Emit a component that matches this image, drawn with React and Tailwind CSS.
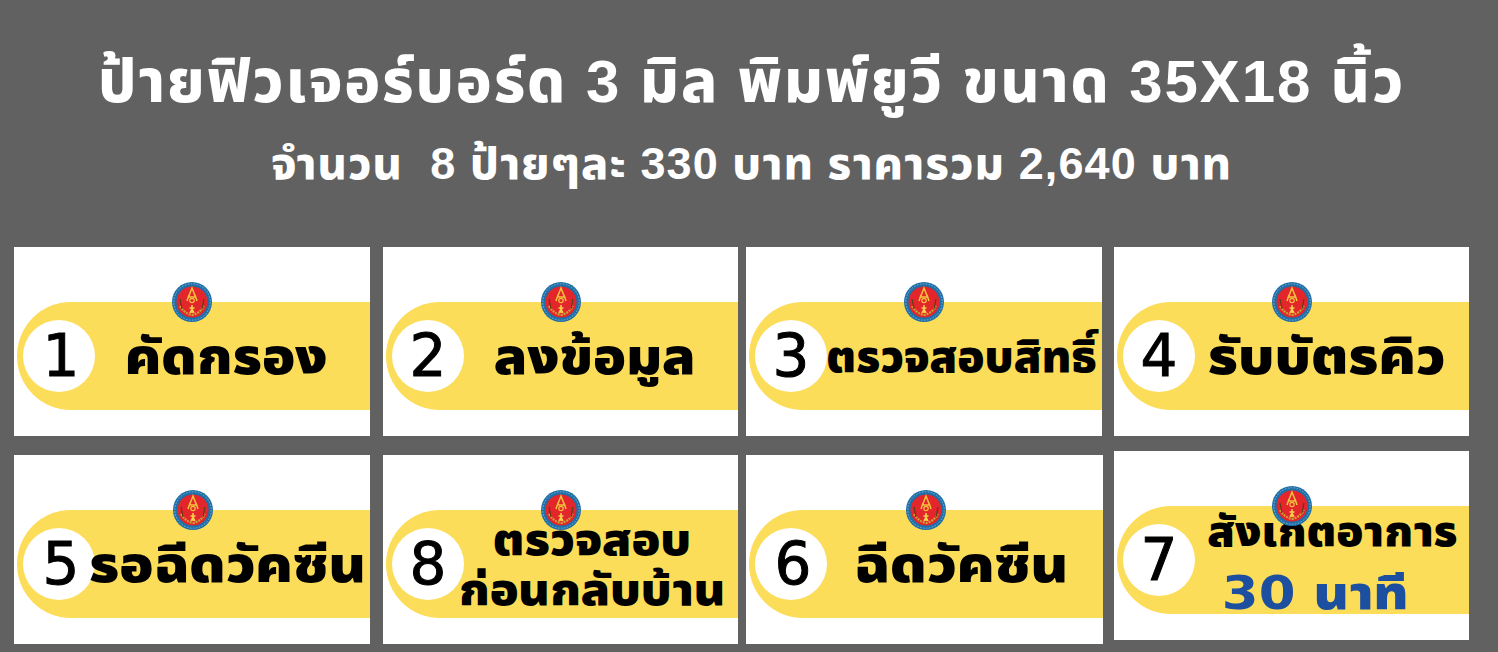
const Logo = () => (
  <svg viewBox="0 0 40 40" className="w-10 h-10">
    <circle cx="20" cy="20" r="20" fill="#1f6fa8" />
    <circle cx="20" cy="20" r="18.2" fill="none" stroke="#7fb4d0" strokeWidth="1" strokeDasharray="1.5 1.5" />
    <circle cx="20" cy="20" r="15.5" fill="#e3262c" />
    <path d="M20 6 L16.5 15 L23.5 15 Z M17 13 L15 19 M23 13 L25 19" fill="none" stroke="#f2c23c" strokeWidth="1.5" />
    <circle cx="20" cy="18.5" r="2.2" fill="none" stroke="#f2c23c" strokeWidth="1.2" />
    <path d="M20 23 L20 31 M17.5 26 L22.5 26 M18 31 L20 27 L22 31" fill="none" stroke="#f5d34a" strokeWidth="1.5" />
    <path d="M8 24 C11 29 15 32 20 33 C25 32 29 29 32 24" fill="none" stroke="#c9a233" strokeWidth="2.2" strokeDasharray="2 1" />
    <path d="M10 27 L8 17 M30 27 L32 17" stroke="#5a3d16" strokeWidth="1.2" />
  </svg>
);

// one sign: white board, yellow band, number circle and logo over the band edge
const Sign = ({ num, className = "", logoClass = "left-[158px]", numClass = "", textClass = "", children }) => (
  <div className={`relative h-[189px] bg-white flex flex-col ${className}`}>
    <div className="h-[108px] ml-[3px] mt-[55px] bg-[#fcdd5a] rounded-l-[54px] flex items-center pl-[6px]">
      <div className={`w-[72px] h-[72px] shrink-0 rounded-full bg-white flex items-center justify-center text-[58px] leading-none text-black [-webkit-text-stroke:1px_black] font-['DejaVu_Sans',sans-serif] ${numClass}`}>
        {num}
      </div>
      <div className={`flex-1 min-w-0 text-center text-black font-black whitespace-nowrap font-['Noto_Sans_Thai',sans-serif] ${textClass}`}>
        {children}
      </div>
    </div>
    <div className={`absolute top-[35px] ${logoClass}`}>
      <Logo />
    </div>
  </div>
);

export default function App() {
  return (
    <div className="w-[1498px] h-[652px] overflow-hidden bg-[#616161] font-['Liberation_Sans','Noto_Sans_Thai',sans-serif]">
      <div className="pt-[44px] pl-[5px] text-center text-white font-extrabold">
        <h1 className="text-[60px] leading-[76px] tracking-[1.9px]">ป้ายฟิวเจอร์บอร์ด 3 มิล พิมพ์ยูวี ขนาด 35X18 นิ้ว</h1>
        <p className="text-[45px] leading-[48px] mt-[20px] tracking-[1.1px] whitespace-pre">จำนวน  8 ป้ายๆละ 330 บาท ราคารวม 2,640 บาท</p>
      </div>

      <div className="mt-[59px] pl-[14px] flex">
        <Sign num="1" className="w-[356px]" numClass="pl-[4px]" textClass="mr-[12px] pt-[6px]">
          <span className="inline-block text-[50px] scale-x-[1.1]">คัดกรอง</span>
        </Sign>
        <Sign num="2" className="w-[355px] ml-[13px]" textClass="mr-[12px] pt-[6px]">
          <span className="inline-block text-[50px] scale-x-[1.09]">ลงข้อมูล</span>
        </Sign>
        <Sign num="3" className="w-[356px] ml-[8px]" textClass="mr-[6px] pt-[6px]">
          <span className="inline-block text-[44px] scale-x-[1.02]">ตรวจสอบสิทธิ์</span>
        </Sign>
        <Sign num="4" className="w-[355px] ml-[12px]" textClass="mr-[10px] pt-[6px]">
          <span className="inline-block text-[50px] scale-x-[1.125]">รับบัตรคิว</span>
        </Sign>
      </div>

      <div className="mt-[19px] pl-[14px] flex items-start">
        <Sign num="5" className="w-[356px]" logoClass="left-[159px]" numClass="pl-[4px]" textClass="mr-[10px] pt-[6px]">
          <span className="inline-block text-[50px] scale-x-[1.13]">รอฉีดวัคซีน</span>
        </Sign>
        <Sign num="8" className="w-[355px] ml-[13px]" textClass="mr-[18px] pt-[6px]">
          <div className="text-[44px] leading-[50px] scale-x-[1.08]">ตรวจสอบ<br />ก่อนกลับบ้าน</div>
        </Sign>
        <Sign num="6" className="w-[357px] ml-[8px]" logoClass="left-[160px]" numClass="pl-[4px]" textClass="mr-[8px] pt-[6px]">
          <span className="inline-block text-[50px] scale-x-[1.14]">ฉีดวัคซีน</span>
        </Sign>
        <Sign num="7" className="w-[355px] ml-[11px] -mt-[4px]" textClass="pt-[16px]">
          <div className="leading-[52px]">
            <span className="inline-block text-[43px] scale-x-[1.04]">สังเกตอาการ</span>
            <br />
            <span className="inline-block -ml-[34px] text-[#1c4fa0] text-[46px] scale-x-[1.15] font-['DejaVu_Sans','Noto_Sans_Thai',sans-serif]">30 นาที</span>
          </div>
        </Sign>
      </div>
    </div>
  );
}
